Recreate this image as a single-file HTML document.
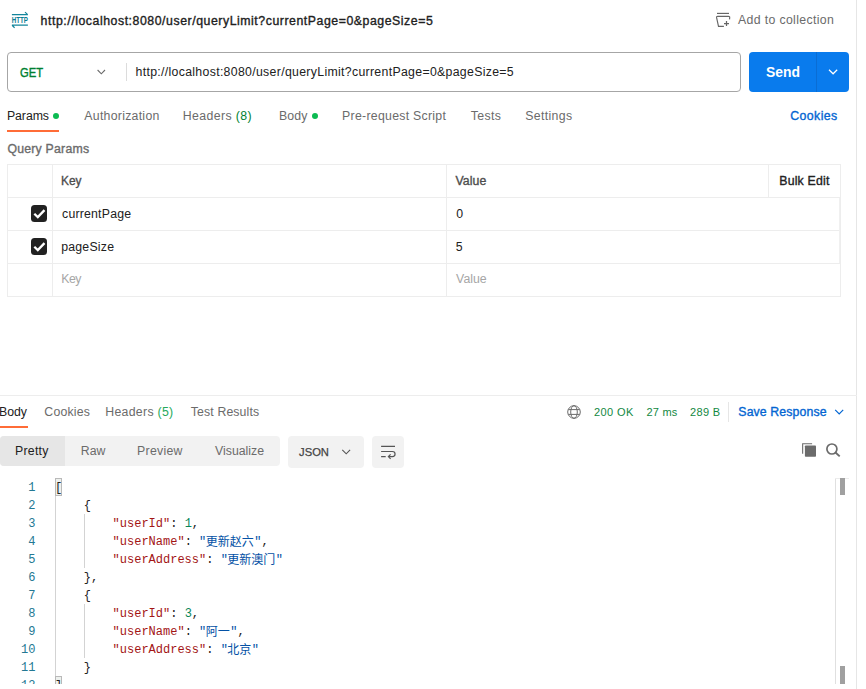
<!DOCTYPE html>
<html lang="en">
<head>
<meta charset="utf-8">
<title>Postman request</title>
<style>
html,body{margin:0;padding:0;}
body{width:866px;height:689px;position:relative;overflow:hidden;background:#fff;
 font-family:"Liberation Sans","Noto Sans CJK SC",sans-serif;font-size:12px;color:#212121;}
.abs{position:absolute;white-space:nowrap;}
.t{position:absolute;white-space:nowrap;line-height:16px;height:16px;}
#vline{left:856px;top:0;width:1px;height:689px;background:#e6e6e6;}
#urlbox{left:7px;top:52px;width:732px;height:38px;border:1px solid #a6a6a6;border-radius:4px;background:#fff;}
#urlsep{left:126px;top:63px;width:1px;height:18px;background:#dcdcdc;}
#send{left:749px;top:52px;width:100px;height:40px;background:#097bed;border-radius:4px;}
#sendsep{left:816px;top:52px;width:1px;height:40px;background:#0a6dd4;}
.dot{position:absolute;width:6px;height:6px;border-radius:3px;background:#0cbb52;}
.g{color:#007f31;}.g2{color:#25a95c;}
#punder{left:7px;top:130px;width:52px;height:2px;background:#ff6c37;}
#tbl{left:7px;top:164px;width:834px;height:133px;border:1px solid #ededed;box-sizing:border-box;}
.hl{position:absolute;height:1px;background:#ededed;left:7px;width:834px;}
.vl{position:absolute;width:1px;background:#ededed;}
.cb{position:absolute;width:16.8px;height:17px;background:#212121;border-radius:3.5px;}
#rline{left:0;top:395px;width:857px;height:1px;background:#ededed;}
#bunder{left:0;top:426px;width:28px;height:2px;background:#ff6c37;}
#ssep{left:728px;top:402px;width:1px;height:20px;background:#e6e6e6;}
#seg{left:0;top:436px;width:280px;height:30px;background:#f2f2f2;border-radius:4px;}
#pretty{left:0;top:436px;width:65px;height:30px;background:#e6e6e6;border-radius:4px 0 0 4px;}
#json{left:288px;top:436px;width:76px;height:32px;background:#f2f2f2;border-radius:4px;}
#wrap{left:372px;top:436px;width:32px;height:32px;background:#f2f2f2;border-radius:4px;}
.ln{position:absolute;white-space:nowrap;height:18px;line-height:18px;left:0;width:35.4px;text-align:right;color:#237893;
 font-family:"Liberation Mono",monospace;font-size:12px;}
.cl{position:absolute;white-space:pre;height:18px;line-height:18px;left:55px;color:#222;
 font-family:"Liberation Mono","Noto Sans CJK SC",monospace;font-size:12px;}
.cj{font-size:12px;letter-spacing:0;position:relative;top:1px;left:-0.6px;}
.k{color:#a31515;}.n{color:#098658;}.s{color:#0451a5;}
.guide{position:absolute;width:1px;background:#d3d3d3;}
#codeclip{left:0;top:470px;width:856px;height:214px;overflow:hidden;}
</style>
</head>
<body>
<div class="abs" id="vline"></div>

<!-- header icons -->
<svg class="abs" style="left:9px;top:10px" width="22" height="20" viewBox="0 0 22 20">
 <g fill="none" stroke="#13859b" stroke-width="1.2">
  <path d="M2.9 4.7H18.9M16 2.1L18.7 4.6"/>
  <path d="M18.9 15.2H2.9M5.6 17.7L3.1 15.3"/>
 </g>
 <text x="2.8" y="12.9" font-family="Liberation Sans, sans-serif" font-size="9" font-weight="bold" fill="#0b7d93" textLength="16.2" lengthAdjust="spacingAndGlyphs">HTTP</text>
</svg>
<svg class="abs" style="left:714px;top:11px" width="18" height="18" viewBox="0 0 18 18">
 <g fill="none" stroke="#666" stroke-width="1.15">
  <path d="M3 2.4H15"/>
  <path d="M9.9 15.3H4.5L2.6 6.7Q2.4 5.4 3.7 5.4H14.6Q15.8 5.4 15.7 6.6L15.5 8.4"/>
  <path d="M12.5 10.1V14.9M10 12.5H15" stroke-width="1.25"/>
 </g>
</svg>

<!-- url bar -->
<div class="abs" id="urlbox"></div>
<svg class="abs" style="left:95px;top:67px" width="12" height="10" viewBox="0 0 12 10"><path d="M2.6 3L6.3 6.8L10 3" fill="none" stroke="#6b6b6b" stroke-width="1.1"/></svg>
<div class="abs" id="urlsep"></div>
<div class="abs" id="send"></div>
<div class="abs" id="sendsep"></div>
<svg class="abs" style="left:826px;top:67px" width="14" height="10" viewBox="0 0 14 10"><path d="M3 2.8L7.1 6.8L11.2 2.8" fill="none" stroke="#fff" stroke-width="1.2"/></svg>

<!-- request tabs -->
<div class="dot" style="left:53.3px;top:113px"></div>
<div class="dot" style="left:312px;top:113px"></div>
<div class="abs" id="punder"></div>

<!-- query params table -->
<div class="abs" id="tbl"></div>
<div class="hl" style="top:197px"></div>
<div class="hl" style="top:230px"></div>
<div class="hl" style="top:263px"></div>
<div class="vl" style="left:52px;top:164px;height:133px"></div>
<div class="vl" style="left:446px;top:164px;height:133px"></div>
<div class="vl" style="left:768px;top:164px;height:33px"></div>
<div class="vl" style="left:839px;top:198px;height:65px;background:#f0f0f0"></div>
<div class="cb" style="left:30.6px;top:205.3px"></div>
<svg class="abs" style="left:30.6px;top:205.3px" width="17" height="17" viewBox="0 0 17 17"><path d="M3.3 8.7L6.8 12.1L13.5 5.1" fill="none" stroke="#fff" stroke-width="2.3"/></svg>
<div class="cb" style="left:30.6px;top:238.4px"></div>
<svg class="abs" style="left:30.6px;top:238.4px" width="17" height="17" viewBox="0 0 17 17"><path d="M3.3 8.7L6.8 12.1L13.5 5.1" fill="none" stroke="#fff" stroke-width="2.3"/></svg>

<!-- response header -->
<div class="abs" id="rline"></div>
<div class="abs" id="bunder"></div>
<svg class="abs" style="left:566px;top:404px" width="16" height="16" viewBox="0 0 16 16">
 <g fill="none" stroke="#6b6b6b" stroke-width="1">
  <circle cx="8" cy="8" r="6.3"/><ellipse cx="8" cy="8" rx="3.3" ry="6.3"/><path d="M2.3 5.6H13.7M2.3 10.4H13.7"/>
 </g>
</svg>
<div class="abs" id="ssep"></div>
<svg class="abs" style="left:833px;top:407px" width="12" height="10" viewBox="0 0 12 10"><path d="M2.2 2.8L6.2 6.8L10.2 2.8" fill="none" stroke="#0265d2" stroke-width="1.2"/></svg>

<!-- view toolbar -->
<div class="abs" id="seg"></div>
<div class="abs" id="pretty"></div>
<div class="abs" id="json"></div>
<svg class="abs" style="left:340px;top:447px" width="12" height="10" viewBox="0 0 12 10"><path d="M2.3 2.8L6.2 6.8L10.1 2.8" fill="none" stroke="#555" stroke-width="1.1"/></svg>
<div class="abs" id="wrap"></div>
<svg class="abs" style="left:380px;top:444px" width="16" height="16" viewBox="0 0 16 16">
 <g fill="none" stroke="#555" stroke-width="1.2">
  <path d="M1.1 2.4H15M1.1 7.5H12.5a2.55 2.55 0 0 1 0 5.1H8.6M1.1 12.6H5.7"/><path d="M10.6 10.4L8.4 12.6L10.6 14.8"/>
 </g>
</svg>
<svg class="abs" style="left:801px;top:442px" width="16" height="16" viewBox="0 0 16 16">
 <path d="M1.1 1.2H11.1V2.3H2.2V11.7H1.1Z" fill="#6b6b6b"/><rect x="3.9" y="3.5" width="11.1" height="11.3" rx="0.8" fill="#6b6b6b"/>
</svg>
<svg class="abs" style="left:825px;top:442px" width="16" height="16" viewBox="0 0 16 16">
 <circle cx="6.9" cy="7" r="5" fill="none" stroke="#6b6b6b" stroke-width="1.7"/><path d="M10.5 10.5L14.7 14.4" stroke="#6b6b6b" stroke-width="1.9"/>
</svg>

<div class="t" id="title" style="left:40.61px;top:13.01px;font-size:12.3px;color:#212121;-webkit-text-stroke:0.35px #212121;letter-spacing:0.545px;">http://localhost:8080/user/queryLimit?currentPage=0&amp;pageSize=5</div>
<div class="t" id="addcol" style="left:737.94px;top:12.01px;font-size:12.3px;color:#6b6b6b;letter-spacing:0.356px;">Add to collection</div>
<div class="t" id="get" style="left:19.58px;top:65.00px;font-size:12.3px;color:#007f31;-webkit-text-stroke:0.4px #007f31;transform:scaleX(0.9107);transform-origin:0 0;">GET</div>
<div class="t" id="url" style="left:135.54px;top:64.01px;font-size:12.3px;color:#212121;letter-spacing:0.316px;">http://localhost:8080/user/queryLimit?currentPage=0&amp;pageSize=5</div>
<div class="t" id="sendtxt" style="left:766.10px;top:64.01px;font-size:14.5px;color:#ffffff;font-weight:bold;transform:scaleX(0.9600);transform-origin:0 0;">Send</div>
<div class="t" id="tparams" style="left:6.89px;top:108.00px;font-size:12.3px;color:#212121;letter-spacing:-0.044px;">Params</div>
<div class="t" id="tauth" style="left:84.30px;top:108.00px;font-size:12.3px;color:#6b6b6b;letter-spacing:0.271px;">Authorization</div>
<div class="t" id="thead" style="left:182.76px;top:108.00px;font-size:12.3px;color:#6b6b6b;letter-spacing:0.394px;">Headers <span class="g">(8)</span></div>
<div class="t" id="tbody" style="left:278.97px;top:108.00px;font-size:12.3px;color:#6b6b6b;letter-spacing:0.110px;">Body</div>
<div class="t" id="tpre" style="left:342.09px;top:108.00px;font-size:12.3px;color:#6b6b6b;letter-spacing:0.277px;">Pre-request Script</div>
<div class="t" id="ttests" style="left:470.80px;top:108.00px;font-size:12.3px;color:#6b6b6b;letter-spacing:0.374px;">Tests</div>
<div class="t" id="tset" style="left:525.17px;top:108.00px;font-size:12.3px;color:#6b6b6b;letter-spacing:0.370px;">Settings</div>
<div class="t" id="cookies" style="left:790.32px;top:108.00px;font-size:12.3px;color:#0265d2;-webkit-text-stroke:0.35px #0265d2;letter-spacing:0.410px;">Cookies</div>
<div class="t" id="qp" style="left:7.38px;top:141.01px;font-size:12.3px;color:#6b6b6b;-webkit-text-stroke:0.35px #6b6b6b;letter-spacing:0.218px;">Query Params</div>
<div class="t" id="hkey" style="left:60.61px;top:173.00px;font-size:12.3px;color:#4d4d4d;-webkit-text-stroke:0.35px #4d4d4d;transform:scaleX(0.9671);transform-origin:0 0;">Key</div>
<div class="t" id="hval" style="left:455.46px;top:173.00px;font-size:12.3px;color:#4d4d4d;-webkit-text-stroke:0.35px #4d4d4d;letter-spacing:0.079px;">Value</div>
<div class="t" id="bulk" style="left:779.23px;top:173.00px;font-size:12.3px;color:#212121;-webkit-text-stroke:0.35px #212121;letter-spacing:0.211px;">Bulk Edit</div>
<div class="t" id="ckey1" style="left:62.04px;top:206.01px;font-size:12.3px;color:#212121;letter-spacing:0.205px;">currentPage</div>
<div class="t" id="cval1" style="left:456.30px;top:206.01px;font-size:12.3px;color:#212121;">0</div>
<div class="t" id="ckey2" style="left:61.18px;top:239.01px;font-size:12.3px;color:#212121;letter-spacing:0.222px;">pageSize</div>
<div class="t" id="cval2" style="left:455.69px;top:239.01px;font-size:12.3px;color:#212121;">5</div>
<div class="t" id="phkey" style="left:61.17px;top:271.00px;font-size:12.3px;color:#a6a6a6;letter-spacing:-0.414px;">Key</div>
<div class="t" id="phval" style="left:456.10px;top:271.00px;font-size:12.3px;color:#a6a6a6;">Value</div>
<div class="t" id="rbody" style="left:-1.03px;top:404.00px;font-size:12.3px;color:#212121;">Body</div>
<div class="t" id="rcook" style="left:44.32px;top:404.00px;font-size:12.3px;color:#6b6b6b;letter-spacing:0.208px;">Cookies</div>
<div class="t" id="rhead" style="left:105.28px;top:404.00px;font-size:12.3px;color:#6b6b6b;letter-spacing:0.298px;">Headers <span class="g2">(5)</span></div>
<div class="t" id="rtest" style="left:190.83px;top:404.00px;font-size:12.3px;color:#6b6b6b;letter-spacing:0.120px;">Test Results</div>
<div class="t" id="s200" style="left:593.98px;top:404.00px;font-size:11px;color:#12883f;letter-spacing:0.429px;">200 OK</div>
<div class="t" id="s27" style="left:646.41px;top:404.00px;font-size:11px;color:#12883f;letter-spacing:0.247px;">27 ms</div>
<div class="t" id="s289" style="left:690.08px;top:404.00px;font-size:11px;color:#12883f;letter-spacing:0.307px;">289 B</div>
<div class="t" id="save" style="left:738.35px;top:404.00px;font-size:12.3px;color:#0265d2;-webkit-text-stroke:0.35px #0265d2;letter-spacing:0.111px;">Save Response</div>
<div class="t" id="vpretty" style="left:14.93px;top:443.00px;font-size:12.3px;color:#212121;letter-spacing:0.282px;">Pretty</div>
<div class="t" id="vraw" style="left:80.76px;top:443.00px;font-size:12.3px;color:#6b6b6b;letter-spacing:0.028px;">Raw</div>
<div class="t" id="vprev" style="left:137.05px;top:443.00px;font-size:12.3px;color:#6b6b6b;letter-spacing:0.286px;">Preview</div>
<div class="t" id="vvis" style="left:215.03px;top:443.00px;font-size:12.3px;color:#6b6b6b;letter-spacing:0.001px;">Visualize</div>
<div class="t" id="vjson" style="left:299.12px;top:444.00px;font-size:11.2px;color:#444444;-webkit-text-stroke:0.25px #444444;">JSON</div>

<!-- code -->
<div class="abs" id="codeclip">
<div class="abs" style="left:55px;top:8px;width:7px;height:18px;border:1px solid #b9b9b9;box-sizing:border-box;background:#eef1ee"></div>
<div class="abs" style="left:55px;top:206px;width:7px;height:18px;border:1px solid #b9b9b9;box-sizing:border-box;background:#eef1ee"></div>
<div class="guide" style="left:55px;top:26px;height:180px"></div>
<div class="guide" style="left:84px;top:44px;height:54px"></div>
<div class="guide" style="left:84px;top:134px;height:54px"></div>
<div class="ln" style="top:8.5px">1</div><div class="cl" style="top:8.5px">[</div>
<div class="ln" style="top:26.5px">2</div><div class="cl" style="top:26.5px">    {</div>
<div class="ln" style="top:44.5px">3</div><div class="cl" style="top:44.5px">        <span class="k">"userId"</span>: <span class="n">1</span>,</div>
<div class="ln" style="top:62.5px">4</div><div class="cl" style="top:62.5px">        <span class="k">"userName"</span>: <span class="s">"<span class="cj">更新赵六</span>"</span>,</div>
<div class="ln" style="top:80.5px">5</div><div class="cl" style="top:80.5px">        <span class="k">"userAddress"</span>: <span class="s">"<span class="cj">更新澳门</span>"</span></div>
<div class="ln" style="top:98.5px">6</div><div class="cl" style="top:98.5px">    },</div>
<div class="ln" style="top:116.5px">7</div><div class="cl" style="top:116.5px">    {</div>
<div class="ln" style="top:134.5px">8</div><div class="cl" style="top:134.5px">        <span class="k">"userId"</span>: <span class="n">3</span>,</div>
<div class="ln" style="top:152.5px">9</div><div class="cl" style="top:152.5px">        <span class="k">"userName"</span>: <span class="s">"<span class="cj">阿一</span>"</span>,</div>
<div class="ln" style="top:170.5px">10</div><div class="cl" style="top:170.5px">        <span class="k">"userAddress"</span>: <span class="s">"<span class="cj">北京</span>"</span></div>
<div class="ln" style="top:188.5px">11</div><div class="cl" style="top:188.5px">    }</div>
<div class="ln" style="top:206.5px">12</div><div class="cl" style="top:206.5px">]</div>
<div class="abs" style="left:835px;top:8px;width:1px;height:206px;background:#e0e0e0"></div>
<div class="abs" style="left:835px;top:8px;width:14px;height:1px;background:#ececec"></div>
<div class="abs" style="left:840px;top:8px;width:5px;height:17px;background:#a0a0a0"></div>
<div class="abs" style="left:840px;top:196px;width:5px;height:18px;background:#a0a0a0"></div>
</div>
</body>
</html>
